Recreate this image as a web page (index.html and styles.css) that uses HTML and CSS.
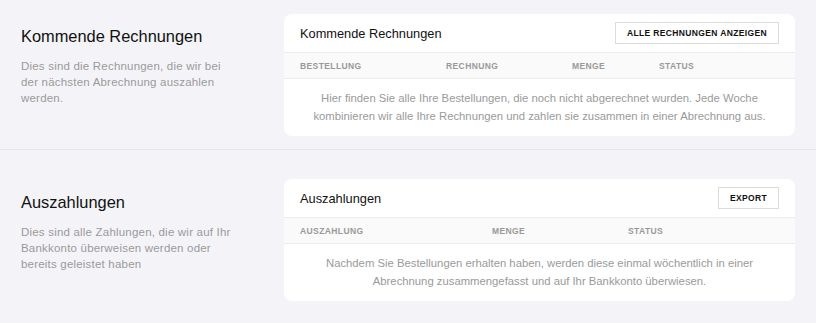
FILE: index.html
```html
<!DOCTYPE html>
<html>
<head>
<meta charset="utf-8">
<link rel="stylesheet" href="styles.css">
</head>
<body>
<section class="section first">
  <div class="intro">
    <h2 class="intro-title">Kommende Rechnungen</h2>
    <p class="intro-text">Dies sind die Rechnungen, die wir bei der nächsten Abrechnung auszahlen werden.</p>
  </div>
  <div class="card">
    <div class="card-head">
      <h3 class="card-title">Kommende Rechnungen</h3>
      <button class="btn">ALLE RECHNUNGEN ANZEIGEN</button>
    </div>
    <div class="thead">
      <span class="th c1">BESTELLUNG</span>
      <span class="th c2">RECHNUNG</span>
      <span class="th c3">MENGE</span>
      <span class="th">STATUS</span>
    </div>
    <p class="empty">Hier finden Sie alle Ihre Bestellungen, die noch nicht abgerechnet wurden. Jede Woche<br>kombinieren wir alle Ihre Rechnungen und zahlen sie zusammen in einer Abrechnung aus.</p>
  </div>
</section>
<section class="section second">
  <div class="intro">
    <h2 class="intro-title">Auszahlungen</h2>
    <p class="intro-text">Dies sind alle Zahlungen, die wir auf Ihr Bankkonto überweisen werden oder bereits geleistet haben</p>
  </div>
  <div class="card">
    <div class="card-head">
      <h3 class="card-title">Auszahlungen</h3>
      <button class="btn">EXPORT</button>
    </div>
    <div class="thead">
      <span class="th d1">AUSZAHLUNG</span>
      <span class="th d2">MENGE</span>
      <span class="th">STATUS</span>
    </div>
    <p class="empty">Nachdem Sie Bestellungen erhalten haben, werden diese einmal wöchentlich in einer<br>Abrechnung zusammengefasst und auf Ihr Bankkonto überwiesen.</p>
  </div>
</section>
</body>
</html>
```
FILE: styles.css
```css
* { box-sizing: border-box; }
html, body { margin: 0; padding: 0; }
body {
  background: #f4f4f8;
  font-family: "Liberation Sans", Arial, sans-serif;
  color: #111;
  width: 816px;
  height: 323px;
  overflow: hidden;
}
.section {
  display: flex;
  padding: 0 21px 0 21px;
}
.first { padding-top: 14px; padding-bottom: 13px; border-bottom: 1px solid #e6e6ea; }
.second { padding-top: 29px; }
.intro { width: 263px; flex: none; }
.intro-title {
  margin: 12px 0 0;
  font-size: 16.4px;
  font-weight: 400;
  line-height: 20px;
}
.second .intro-title { margin-top: 13px; }
.intro-text {
  margin: 12px 0 0;
  font-size: 11.5px;
  line-height: 16px;
  color: #9a9a9a;
  width: 215px;
  letter-spacing: 0.2px;
}
.card {
  flex: 1;
  background: #fff;
  border-radius: 8px;
  height: 122px;
  overflow: hidden;
}
.card-head {
  display: flex;
  align-items: center;
  justify-content: space-between;
  height: 39px;
  padding: 0 16px;
  border-bottom: 1px solid #ececec;
}
.card-title {
  margin: 0;
  font-size: 12.8px;
  font-weight: 400;
}
.btn {
  font-family: inherit;
  background: #fff;
  border: 1px solid #dcdcdc;
  height: 22px;
  padding: 0 11px;
  font-size: 8.5px;
  font-weight: 700;
  letter-spacing: 0.36px;
  color: #111;
}
.thead {
  display: flex;
  align-items: center;
  height: 26px;
  padding: 0 16px;
  background: #fafafa;
  border-bottom: 1px solid #ececec;
}
.th {
  font-size: 8.5px;
  font-weight: 700;
  letter-spacing: 0.4px;
  color: #999;
}
.c1 { width: 146px; }
.c2 { width: 126px; }
.c3 { width: 87px; }
.d1 { width: 192px; }
.d2 { width: 136px; }
.empty {
  margin: 10px 0 0;
  text-align: center;
  font-size: 11.3px;
  line-height: 18px;
  color: #9a9a9a;
}
```
